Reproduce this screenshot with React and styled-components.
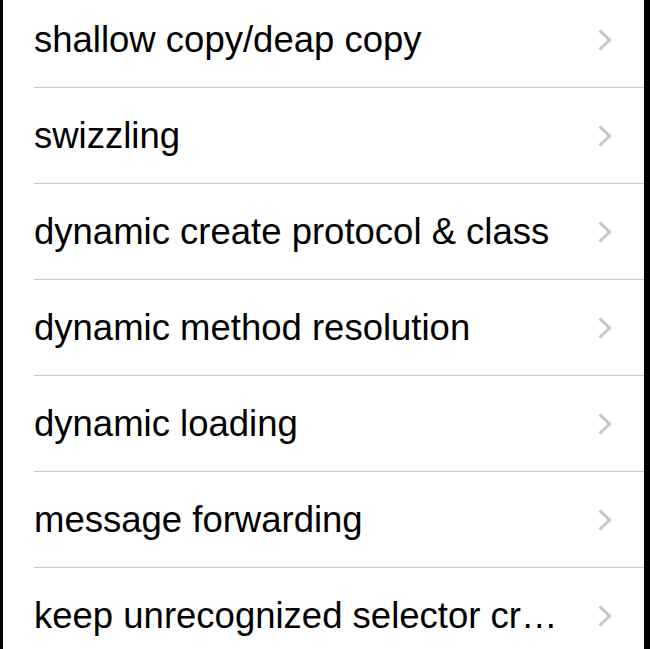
import React from "react";
import styled, { createGlobalStyle } from "styled-components";

const items = [
  "shallow copy/deap copy",
  "swizzling",
  "dynamic create protocol & class",
  "dynamic method resolution",
  "dynamic loading",
  "message forwarding",
  "keep unrecognized selector cr…",
];

const GlobalStyle = createGlobalStyle`
  html, body {
    margin: 0;
    padding: 0;
    background: #000;
    height: 649px;
    overflow: hidden;
  }
`;

const Screen = styled.div`
  margin-left: 3px;
  width: 641px;
  height: 649px;
  background: #fff;
  overflow: hidden;
`;

const List = styled.ul`
  list-style: none;
  margin: -8px 0 0 0;
  padding: 0 0 0 31px;
`;

const Row = styled.li`
  display: flex;
  align-items: center;
  height: 95px;
  border-bottom: 1px solid #c8c7cc;
  padding-right: 32px;
`;

const Label = styled.span`
  flex: 1;
  min-width: 0;
  padding-right: 24px;
  font-family: "Liberation Sans", Arial, sans-serif;
  font-size: 36.5px;
  color: #000;
  white-space: nowrap;
  overflow: hidden;
  text-overflow: ellipsis;
`;

const Chevron = styled.svg`
  flex: none;
  width: 14px;
  height: 22px;
`;

function Disclosure() {
  return (
    <Chevron viewBox="0 0 14 22">
      <path
        d="M2.5 2.5 L11.5 11 L2.5 19.5"
        fill="none"
        stroke="#c7c7cc"
        strokeWidth="3"
        strokeLinecap="square"
      />
    </Chevron>
  );
}

export default function App() {
  return (
    <>
      <GlobalStyle />
      <Screen>
        <List>
          {items.map((t) => (
            <Row key={t}>
              <Label>{t}</Label>
              <Disclosure />
            </Row>
          ))}
        </List>
      </Screen>
    </>
  );
}
